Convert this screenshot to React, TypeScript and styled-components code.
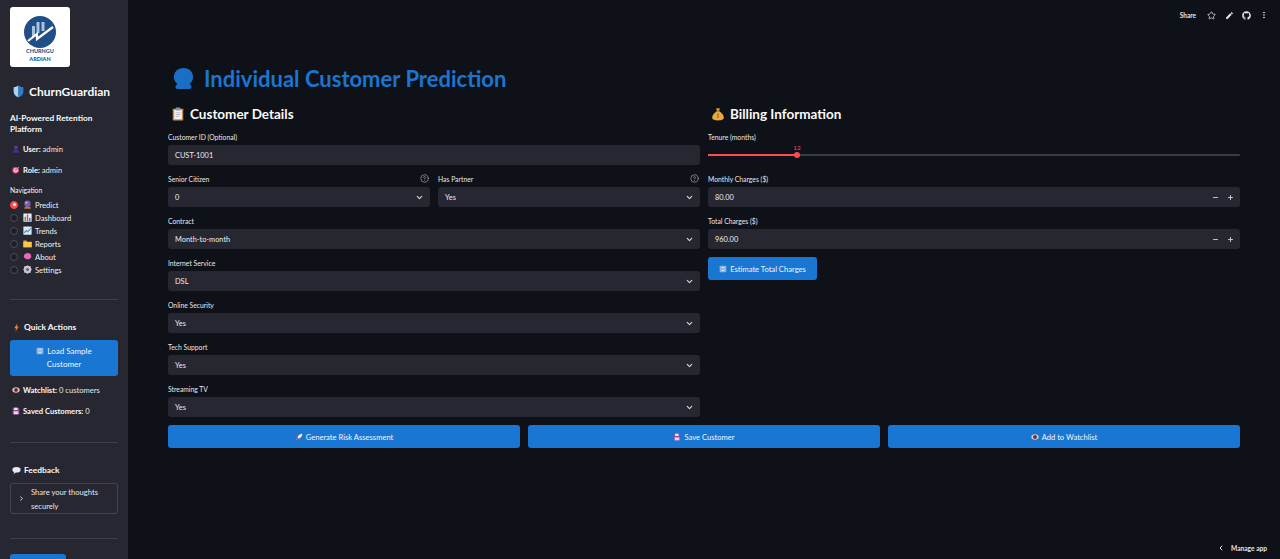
import React from "react";
import styled, { createGlobalStyle } from "styled-components";
import { ChevronDown, ChevronLeft, ChevronRight, CircleHelp, Minus, Plus, Star } from "lucide-react";
import { FaGithub } from "react-icons/fa";
import { MdEdit, MdMoreVert } from "react-icons/md";

const FONT = `Lato, "Noto Sans", sans-serif`;

const GlobalStyle = createGlobalStyle`
  html, body {
    margin: 0;
    padding: 0;
    height: 100%;
    background: #0e1117;
    font-family: ${FONT};
  }
  * { box-sizing: border-box; }
`;

const Root = styled.div`
  display: flex;
  width: 1280px;
  height: 559px;
  overflow: hidden;
  position: relative;
  background: #0e1117;
  color: #fafafa;
`;

const Sidebar = styled.aside`
  width: 128px;
  flex: none;
  height: 559px;
  overflow: hidden;
  background: #262730;
  padding: 7px 10px 0;
  display: flex;
  flex-direction: column;
`;

const LogoCard = styled.div`
  width: 60px;
  height: 60px;
  flex: none;
  background: #fff;
  border-radius: 3px;
  display: flex;
  flex-direction: column;
  align-items: center;
  padding-top: 9px;
`;

const LogoText = styled.div`
  color: #1f5a96;
  font-size: 5.5px;
  line-height: 8px;
  font-weight: 900;
  text-align: center;
  margin-top: -1px;
`;

const Brand = styled.div`
  display: flex;
  align-items: center;
  gap: 4px;
  height: 18px;
  margin: 17px 0 0 2px;
  font-size: 12px;
  font-weight: 700;
`;

const Tagline = styled.div`
  margin-top: 14px;
  font-size: 8.3px;
  line-height: 11px;
  font-weight: 700;
`;

const Info = styled.div<{ $top: number }>`
  display: flex;
  align-items: center;
  gap: 3px;
  height: 11px;
  margin-top: ${(p) => p.$top}px;
  margin-left: 2px;
  font-size: 7.6px;
  color: #e6e6ea;
  white-space: nowrap;
  b { font-weight: 700; color: #fafafa; }
`;

const NavLabel = styled.div`
  margin-top: 10px;
  height: 10px;
  font-size: 6.8px;
  line-height: 10px;
`;

const NavList = styled.div`
  margin-top: 3px;
  display: flex;
  flex-direction: column;
`;

const NavItem = styled.div`
  display: flex;
  align-items: center;
  height: 13px;
  font-size: 7.6px;
  color: #f0f0f2;
`;

const Radio = styled.span<{ $on?: boolean }>`
  width: 8px;
  height: 8px;
  flex: none;
  border-radius: 50%;
  margin-right: 5px;
  background: ${(p) => (p.$on ? "#ff4b4b" : "#1d1e26")};
  border: 1px solid ${(p) => (p.$on ? "#ff4b4b" : "#4c4d57")};
  display: flex;
  align-items: center;
  justify-content: center;
  &::after {
    content: "";
    display: ${(p) => (p.$on ? "block" : "none")};
    width: 3px;
    height: 3px;
    border-radius: 50%;
    background: #fff;
  }
`;

const NavEmoji = styled.span`
  width: 12px;
  flex: none;
  display: flex;
  align-items: center;
`;

const Rule = styled.hr<{ $top: number }>`
  width: 100%;
  height: 1px;
  flex: none;
  border: none;
  margin: ${(p) => p.$top}px 0 0;
  background: #3d3e48;
`;

const SideHeading = styled.div<{ $top: number }>`
  display: flex;
  align-items: center;
  gap: 3px;
  height: 12px;
  margin: ${(p) => p.$top}px 0 0 2px;
  font-size: 8.4px;
  font-weight: 700;
`;

const BlueButton = styled.button`
  border: none;
  border-radius: 3px;
  background: #1976d2;
  color: #f2f7fd;
  font-family: ${FONT};
  font-size: 7.6px;
  display: flex;
  align-items: center;
  justify-content: center;
  gap: 3px;
  padding: 0;
`;

const SampleButton = styled(BlueButton)`
  width: 108px;
  height: 36px;
  flex: none;
  margin-top: 8px;
  font-size: 8px;
  line-height: 13px;
  text-align: center;
  display: block;
  span { display: inline-flex; vertical-align: -1px; margin-right: 3px; }
`;

const Expander = styled.div`
  width: 108px;
  height: 31px;
  flex: none;
  margin-top: 8px;
  border: 1px solid #43444e;
  border-radius: 3px;
  display: flex;
  align-items: center;
  padding-left: 7px;
  font-size: 7.6px;
  line-height: 14px;
  color: #e6e6ea;
`;

const ExpanderText = styled.div`
  margin-left: 6px;
`;

const StubButton = styled(BlueButton)`
  width: 56px;
  height: 30px;
  flex: none;
  margin-top: 15px;
`;

const Main = styled.main`
  flex: 1;
  min-width: 0;
  display: flex;
  flex-direction: column;
`;

const TopBar = styled.header`
  height: 30px;
  flex: none;
  display: flex;
  align-items: center;
  justify-content: flex-end;
  padding-right: 10px;
  color: #e6e6ea;
`;

const ShareText = styled.span`
  font-size: 6.5px;
  font-weight: 700;
  margin-right: 4px;
`;

const TopIcon = styled.span`
  width: 12px;
  margin-left: 5.500px;
  display: flex;
  justify-content: center;
`;

const Content = styled.div`
  padding: 0 40px 0 40px;
`;

const Title = styled.h1`
  display: flex;
  align-items: center;
  gap: 9px;
  height: 28px;
  margin: 34px 0 0;
  padding-left: 4px;
  font-size: 22px;
  font-weight: 700;
  color: #1976d2;
  white-space: nowrap;
`;

const Columns = styled.div`
  display: grid;
  grid-template-columns: 532px 532px;
  gap: 8px;
  margin-top: 15px;
`;

const Column = styled.section`
  min-width: 0;
`;

const SectionTitle = styled.h2`
  display: flex;
  align-items: center;
  gap: 5px;
  height: 14px;
  margin: 0 0 9px;
  padding-left: 3px;
  font-size: 13.500px;
  font-weight: 700;
  color: #fafafa;
`;

const Field = styled.div`
  margin-bottom: 7px;
`;

const LabelRow = styled.div`
  display: flex;
  justify-content: space-between;
  align-items: center;
  height: 15px;
  padding-bottom: 2px;
  font-size: 6.8px;
  color: #e8e8ec;
  svg { color: #9a9ba3; margin-right: 1px; }
`;

const Control = styled.div`
  height: 20px;
  border-radius: 3px;
  background: #262730;
  display: flex;
  align-items: center;
  justify-content: space-between;
  padding: 0 6px 0 7px;
  font-size: 7.4px;
  color: #ececf0;
  svg { color: #d8d8dc; }
`;

const TwoUp = styled.div`
  display: grid;
  grid-template-columns: 1fr 1fr;
  gap: 8px;
`;

const Stepper = styled.div`
  display: flex;
  gap: 8px;
  align-items: center;
`;

const SliderBox = styled.div`
  height: 20px;
  position: relative;
`;

const SliderTrack = styled.div`
  position: absolute;
  left: 0;
  right: 0;
  top: 9px;
  height: 2px;
  background: #3a3b44;
  border-radius: 1px;
`;

const SliderFill = styled.div`
  position: absolute;
  left: 0;
  top: 9px;
  height: 2px;
  background: #ff4b4b;
`;

const SliderThumb = styled.div`
  position: absolute;
  top: 7px;
  width: 6px;
  height: 6px;
  margin-left: -3px;
  border-radius: 50%;
  background: #ff4b4b;
`;

const SliderValue = styled.div`
  position: absolute;
  top: -2px;
  width: 20px;
  margin-left: -10px;
  text-align: center;
  font-size: 6.5px;
  line-height: 9px;
  color: #ff4b4b;
`;

const EstimateButton = styled(BlueButton)`
  width: 109px;
  height: 23px;
  margin-top: 8px;
`;

const Actions = styled.div`
  display: grid;
  grid-template-columns: repeat(3, 352px);
  gap: 8px;
  margin-top: 1px;
`;

const ActionButton = styled(BlueButton)`
  height: 23px;
`;

const ManageApp = styled.div`
  position: absolute;
  right: 13px;
  bottom: 5px;
  display: flex;
  align-items: center;
  gap: 6px;
  font-size: 6.6px;
  font-weight: 700;
  line-height: 12px;
  color: #e6e6ea;
`;

type EmojiName =
  | "shield" | "user" | "target" | "ball" | "bars" | "trend" | "folder" | "brain" | "gear"
  | "bolt" | "refresh" | "eye" | "floppy" | "bubble" | "rocket" | "clipboard" | "money" | "head";

const shapes: Record<EmojiName, React.ReactNode> = {
  shield: (
    <>
      <path d="M12 1C9 3 6 4 3 4v8c0 5.5 4 9 9 11z" fill="#a9d4f5" />
      <path d="M12 1c3 2 6 3 9 3v8c0 5.5-4 9-9 11z" fill="#2a7fd0" />
    </>
  ),
  user: (
    <>
      <circle cx="12" cy="7" r="5.5" fill="#5b3aa0" />
      <path d="M3 23c0-7 4-10 9-10s9 3 9 10z" fill="#4a2d8c" />
    </>
  ),
  target: (
    <>
      <circle cx="11" cy="13" r="10" fill="#e8467c" />
      <circle cx="11" cy="13" r="6" fill="#f5f0f2" />
      <circle cx="11" cy="13" r="3" fill="#e8467c" />
      <path d="M11 13 21 3" stroke="#4aa3df" strokeWidth="3" />
    </>
  ),
  ball: (
    <>
      <circle cx="12" cy="10" r="8.5" fill="#7c5bb0" />
      <circle cx="9" cy="7" r="2.5" fill="#d9c9ee" />
      <path d="M5 18h14l2 5H3z" fill="#c2763c" />
    </>
  ),
  bars: (
    <>
      <rect x="1" y="1" width="22" height="22" rx="1" fill="#e8edf2" />
      <rect x="4" y="10" width="4" height="12" fill="#35b46a" />
      <rect x="10" y="4" width="4" height="18" fill="#e5484d" />
      <rect x="16" y="13" width="4" height="9" fill="#2d7fd3" />
    </>
  ),
  trend: (
    <>
      <rect x="1" y="1" width="22" height="22" rx="1" fill="#dfe6ee" />
      <path d="M3 18 9 12l4 3 8-9" stroke="#4a90d9" strokeWidth="3" fill="none" />
    </>
  ),
  folder: (
    <>
      <path d="M1 4h8l2 3h12v15H1z" fill="#e8a93a" />
      <rect x="1" y="8" width="22" height="14" fill="#f8c94c" />
    </>
  ),
  brain: (
    <path d="M6 5c3-3 10-3 13 0 4 2 4 10 0 12-3 3-10 3-13 0-5-2-5-10 0-12z" fill="#e66ab8" />
  ),
  gear: (
    <>
      <circle cx="12" cy="12" r="7.5" fill="none" stroke="#c9c4d6" strokeWidth="5" />
      <path d="M12 1v22M1 12h22M4 4l16 16M20 4 4 20" stroke="#c9c4d6" strokeWidth="3" />
      <circle cx="12" cy="12" r="3.5" fill="#4a4658" />
    </>
  ),
  bolt: <path d="M14 1 6 14h5l-2 9 9-14h-5z" fill="#f2803a" />,
  refresh: (
    <>
      <rect x="2" y="2" width="20" height="20" rx="2" fill="#8db4dd" />
      <path d="M7 10c2-4 8-4 10 0M17 14c-2 4-8 4-10 0" stroke="#eef4fb" strokeWidth="2.5" fill="none" />
    </>
  ),
  eye: (
    <>
      <ellipse cx="12" cy="12" rx="11" ry="8" fill="#d8c8c8" />
      <circle cx="12" cy="12" r="6" fill="#8a3a3a" />
      <circle cx="12" cy="12" r="2.5" fill="#2a1a1a" />
    </>
  ),
  floppy: (
    <>
      <path d="M2 2h17l3 3v17H2z" fill="#8c4a9e" />
      <rect x="6" y="2" width="11" height="7" fill="#e4e0ea" />
      <rect x="5" y="13" width="14" height="9" fill="#f3d2e4" />
    </>
  ),
  bubble: (
    <>
      <ellipse cx="12" cy="10" rx="11" ry="7.5" fill="#e9e9ef" />
      <path d="M6 15 4 21l7-4z" fill="#e9e9ef" />
    </>
  ),
  rocket: (
    <>
      <path d="M22 2c-7 0-12 4-15 11l4 4c7-3 11-8 11-15z" fill="#e9eef4" />
      <path d="M7 13 2 14l3-6h5zM11 17l-1 5 6-3v-5z" fill="#e5484d" />
      <path d="M6 17c-2 1-3 3-3 4 2 0 3-1 4-3z" fill="#f59e3a" />
    </>
  ),
  clipboard: (
    <>
      <rect x="3" y="3" width="18" height="20" rx="1" fill="#c98b4e" />
      <rect x="5.5" y="5" width="13" height="16" fill="#f2f2f2" />
      <rect x="8" y="1" width="8" height="5" rx="1" fill="#8d9299" />
      <path d="M8 10h8M8 13h8M8 16h6" stroke="#a5a9b0" strokeWidth="1.2" />
    </>
  ),
  money: (
    <>
      <path d="M9 2h6l-1 5h-4z" fill="#e0a13a" />
      <path d="M10 7h4c4 3 8 7 8 11 0 3-3 5-10 5S2 21 2 18c0-4 4-8 8-11z" fill="#e8a93c" />
      <path d="M9 7h6" stroke="#8a5a1c" strokeWidth="1.5" />
      <path d="M12 11v8" stroke="#a85e20" strokeWidth="2" />
    </>
  ),
  head: (
    <path d="M12 1c6 0 10 4 10 9.5 0 3.500-1.500 5.500-3.500 7l1.500 2c1 1.500 0 3.500-2 3.500H6c-2 0-3-2-2-3.500l1.500-2C3.500 16 2 14 2 10.500 2 5 6 1 12 1z" fill="#1a6fc4" />
  ),
};

const Emoji = ({ name, size = 8 }: { name: EmojiName; size?: number }) => (
  <svg width={size} height={size} viewBox="0 0 24 24" style={{ flex: "none" }}>
    {shapes[name]}
  </svg>
);

const Logo = () => (
  <svg width="32" height="32" viewBox="0 0 32 32">
    <circle cx="16" cy="16" r="16" fill="#1f4f86" />
    <path d="M9.500 10v11M14 6v11M19 6v9" stroke="#a9c2de" strokeWidth="3" />
    <path d="M4 25 13 18v5L29 11" stroke="#fff" strokeWidth="2.200" fill="none" />
  </svg>
);

const navItems: { label: string; icon: EmojiName }[] = [
  { label: "Predict", icon: "ball" },
  { label: "Dashboard", icon: "bars" },
  { label: "Trends", icon: "trend" },
  { label: "Reports", icon: "folder" },
  { label: "About", icon: "brain" },
  { label: "Settings", icon: "gear" },
];

const selects = [
  { label: "Contract", value: "Month-to-month" },
  { label: "Internet Service", value: "DSL" },
  { label: "Online Security", value: "Yes" },
  { label: "Tech Support", value: "Yes" },
  { label: "Streaming TV", value: "Yes" },
];

const Select = ({ label, value, help }: { label: string; value: string; help?: boolean }) => (
  <Field>
    <LabelRow>
      {label}
      {help && <CircleHelp size={9} />}
    </LabelRow>
    <Control>
      {value}
      <ChevronDown size={9} strokeWidth={3} />
    </Control>
  </Field>
);

const NumberInput = ({ label, value }: { label: string; value: string }) => (
  <Field>
    <LabelRow>{label}</LabelRow>
    <Control>
      {value}
      <Stepper>
        <Minus size={7} strokeWidth={3} />
        <Plus size={7} strokeWidth={3} />
      </Stepper>
    </Control>
  </Field>
);

export default function App() {
  return (
    <Root>
      <GlobalStyle />
      <Sidebar>
        <LogoCard>
          <Logo />
          <LogoText>
            CHURNGU
            <br />
            ARDIAN
          </LogoText>
        </LogoCard>
        <Brand>
          <Emoji name="shield" size={13} />
          ChurnGuardian
        </Brand>
        <Tagline>
          AI-Powered Retention
          <br />
          Platform
        </Tagline>
        <Info $top={9}>
          <Emoji name="user" />
          <span>
            <b>User:</b> admin
          </span>
        </Info>
        <Info $top={11}>
          <Emoji name="target" />
          <span>
            <b>Role:</b> admin
          </span>
        </Info>
        <NavLabel>Navigation</NavLabel>
        <NavList>
          {navItems.map((item, i) => (
            <NavItem key={item.label}>
              <Radio $on={i === 0} />
              <NavEmoji>
                <Emoji name={item.icon} size={9} />
              </NavEmoji>
              {item.label}
            </NavItem>
          ))}
        </NavList>
        <Rule $top={23} />
        <SideHeading $top={22}>
          <Emoji name="bolt" size={9} />
          Quick Actions
        </SideHeading>
        <SampleButton>
          <span>
            <Emoji name="refresh" />
          </span>
          Load Sample
          <br />
          Customer
        </SampleButton>
        <Info $top={9}>
          <Emoji name="eye" />
          <span>
            <b>Watchlist:</b> 0 customers
          </span>
        </Info>
        <Info $top={11}>
          <Emoji name="floppy" />
          <span>
            <b>Saved Customers:</b> 0
          </span>
        </Info>
        <Rule $top={26} />
        <SideHeading $top={22}>
          <Emoji name="bubble" size={9} />
          Feedback
        </SideHeading>
        <Expander>
          <ChevronRight size={7} strokeWidth={3} />
          <ExpanderText>
            Share your thoughts
            <br />
            securely
          </ExpanderText>
        </Expander>
        <Rule $top={24} />
        <StubButton />
      </Sidebar>
      <Main>
        <TopBar>
          <ShareText>Share</ShareText>
          <TopIcon>
            <Star size={9} strokeWidth={2} />
          </TopIcon>
          <TopIcon>
            <MdEdit size={9} />
          </TopIcon>
          <TopIcon>
            <FaGithub size={9} />
          </TopIcon>
          <TopIcon>
            <MdMoreVert size={10} />
          </TopIcon>
        </TopBar>
        <Content>
          <Title>
            <Emoji name="head" size={23} />
            Individual Customer Prediction
          </Title>
          <Columns>
            <Column>
              <SectionTitle>
                <Emoji name="clipboard" size={14} />
                Customer Details
              </SectionTitle>
              <Field>
                <LabelRow>Customer ID (Optional)</LabelRow>
                <Control>CUST-1001</Control>
              </Field>
              <TwoUp>
                <Select label="Senior Citizen" value="0" help />
                <Select label="Has Partner" value="Yes" help />
              </TwoUp>
              {selects.map((s) => (
                <Select key={s.label} label={s.label} value={s.value} />
              ))}
            </Column>
            <Column>
              <SectionTitle>
                <Emoji name="money" size={14} />
                Billing Information
              </SectionTitle>
              <Field>
                <LabelRow>Tenure (months)</LabelRow>
                <SliderBox>
                  <SliderTrack />
                  <SliderFill style={{ width: 89 }} />
                  <SliderThumb style={{ left: 89 }} />
                  <SliderValue style={{ left: 89 }}>12</SliderValue>
                </SliderBox>
              </Field>
              <NumberInput label="Monthly Charges ($)" value="80.00" />
              <NumberInput label="Total Charges ($)" value="960.00" />
              <EstimateButton>
                <Emoji name="refresh" />
                Estimate Total Charges
              </EstimateButton>
            </Column>
          </Columns>
          <Actions>
            <ActionButton>
              <Emoji name="rocket" />
              Generate Risk Assessment
            </ActionButton>
            <ActionButton>
              <Emoji name="floppy" />
              Save Customer
            </ActionButton>
            <ActionButton>
              <Emoji name="eye" />
              Add to Watchlist
            </ActionButton>
          </Actions>
        </Content>
      </Main>
      <ManageApp>
        <ChevronLeft size={8} strokeWidth={3} />
        Manage app
      </ManageApp>
    </Root>
  );
}
